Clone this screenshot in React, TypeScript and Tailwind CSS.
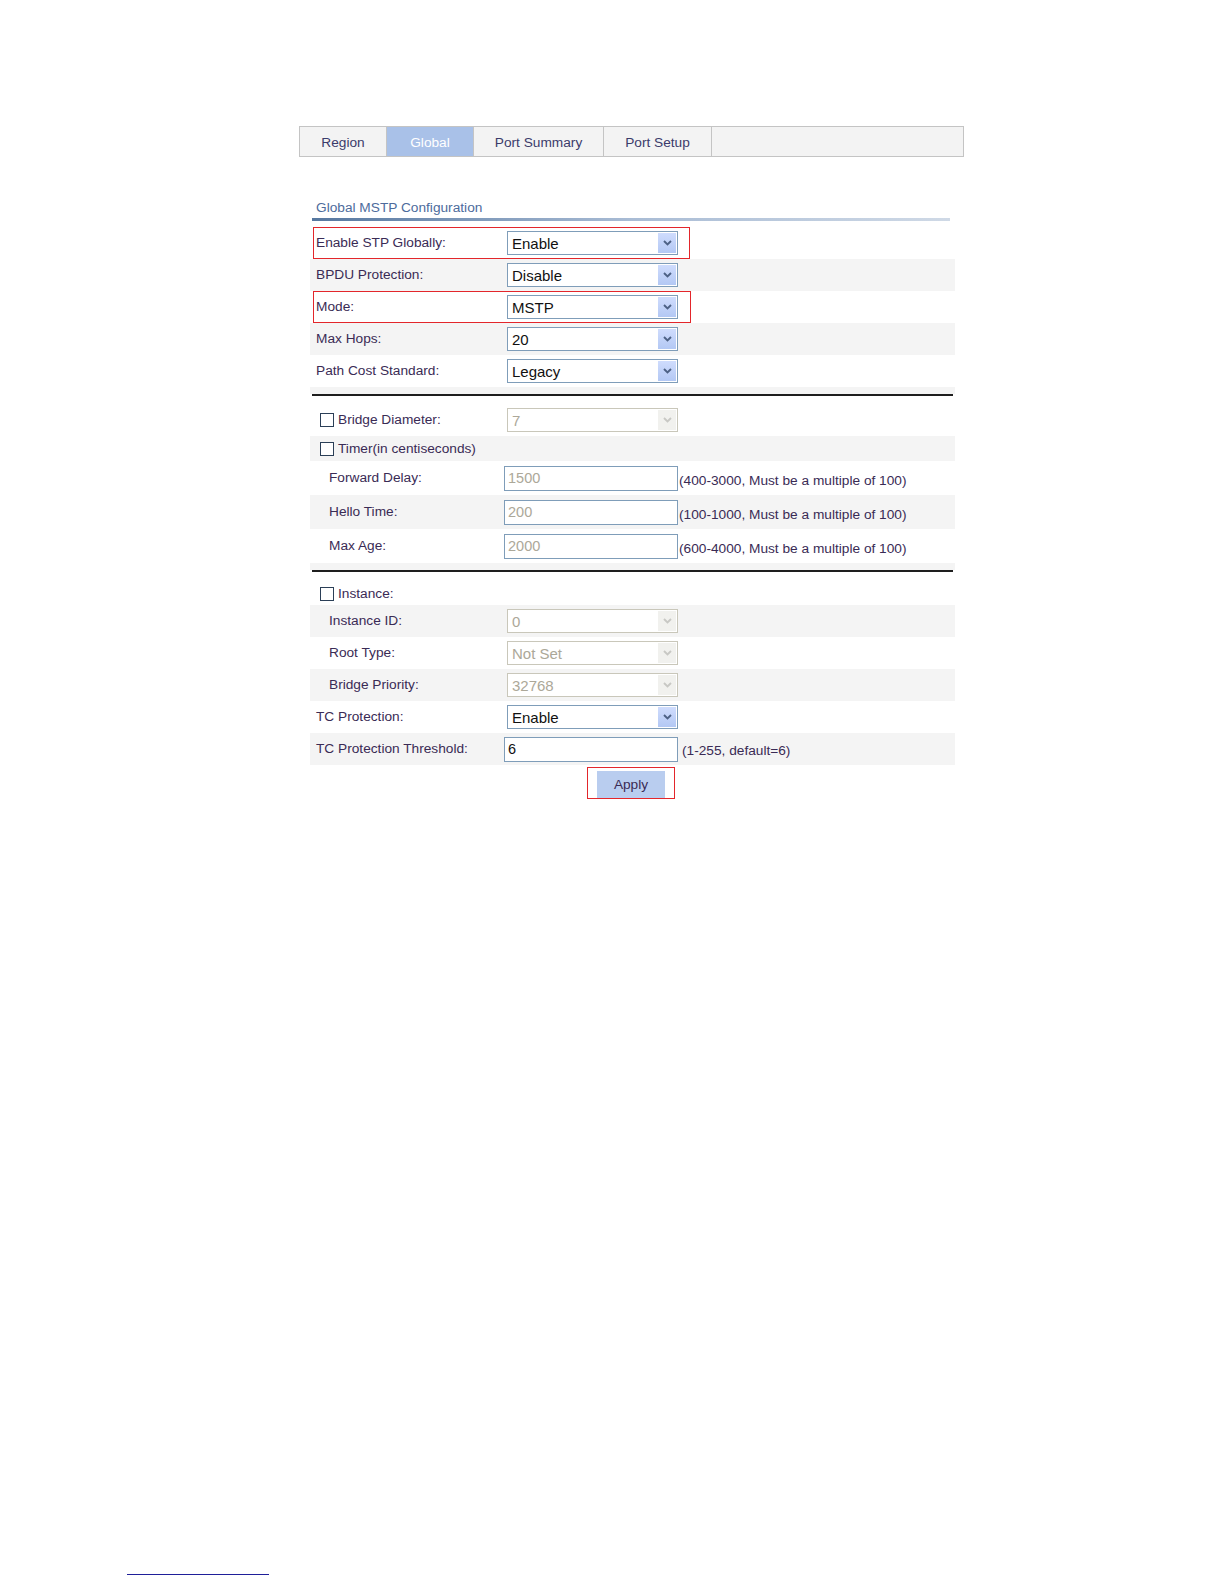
import React from "react";

const LABEL = "text-[#3a2b55]";

function Chevron({ color }: { color: string }) {
  return (
    <svg width="9" height="6" viewBox="0 0 9 6" fill="none">
      <path d="M1 1 L4.5 4.5 L8 1" stroke={color} strokeWidth="1.9" />
    </svg>
  );
}

function Select({ value, disabled = false }: { value: string; disabled?: boolean }) {
  return (
    <div
      className={
        disabled
          ? "w-[171px] h-[24px] border border-[#c9c7ba] bg-white flex items-center"
          : "w-[171px] h-[24px] border border-[#7f9db9] bg-white flex items-center"
      }
    >
      <span
        className={
          disabled
            ? "pl-[4px] text-[15px] text-[#aca899] leading-none"
            : "pl-[4px] text-[15px] text-[#111111] leading-none"
        }
      >
        {value}
      </span>
      <div
        className={
          disabled
            ? "ml-auto mr-px w-[18px] h-[20px] bg-[#f1f1ee] flex items-center justify-center"
            : "ml-auto mr-px w-[18px] h-[20px] bg-linear-to-b from-[#cfdcfd] to-[#b3c8f4] flex items-center justify-center"
        }
      >
        <Chevron color={disabled ? "#c8c8c4" : "#4d6185"} />
      </div>
    </div>
  );
}

function TextInput({ value, disabled = false }: { value: string; disabled?: boolean }) {
  return (
    <div className="w-[174px] h-[25px] border border-[#7f9db9] bg-white flex items-center">
      <span
        className={
          disabled
            ? "pl-[3px] text-[14.5px] text-[#aca899] leading-none"
            : "pl-[3px] text-[14.5px] text-[#111111] leading-none"
        }
      >
        {value}
      </span>
    </div>
  );
}

function Checkbox() {
  return <div className="w-[14px] h-[14px] border border-[#2b3f57] bg-white shrink-0" />;
}

function Row({
  gray,
  h = "h-[32px]",
  children,
}: {
  gray?: boolean;
  h?: string;
  children: React.ReactNode;
}) {
  return (
    <div className={(gray ? "bg-[#f4f4f4] " : "bg-white ") + h + " relative flex items-center"}>
      {children}
    </div>
  );
}

function Label({ text, indent = false, w = "w-[197px]" }: { text: string; indent?: boolean; w?: string }) {
  return (
    <div className={(indent ? "pl-[19px] " : "pl-[6px] ") + w + " shrink-0 text-[13.7px] " + LABEL}>
      {text}
    </div>
  );
}

function RedBox({ w }: { w: string }) {
  return <div className={"absolute left-[3px] top-0 h-[32px] border border-[#e3262b] " + w} />;
}

function Separator() {
  return (
    <>
      <div className="h-[7px] bg-[#f4f4f4]" />
      <div className="h-[2px] bg-[#1e1e1e] mx-[2px]" />
      <div className="h-[8px] bg-white" />
    </>
  );
}

export default function App() {
  return (
    <div className="w-[1224px] h-[1584px] bg-white flex flex-col font-['Liberation_Sans',Arial,sans-serif]">
      {/* Tabs */}
      <div className="pt-[126px] pl-[299px]">
        <div className="w-[665px] h-[31px] flex border border-[#c4c4c4] bg-[#f3f3f3] text-[13.7px]">
          <div className="w-[87px] pt-[3px] border-r border-[#c4c4c4] flex items-center justify-center text-[#3b3b6b]">
            Region
          </div>
          <div className="w-[87px] pt-[3px] border-r border-[#c4c4c4] bg-[#a9c1e8] flex items-center justify-center text-white">
            Global
          </div>
          <div className="w-[130px] pt-[3px] border-r border-[#c4c4c4] flex items-center justify-center text-[#3b3b6b]">
            Port Summary
          </div>
          <div className="w-[108px] pt-[3px] border-r border-[#c4c4c4] flex items-center justify-center text-[#3b3b6b]">
            Port Setup
          </div>
          <div className="flex-1" />
        </div>
      </div>

      {/* Form */}
      <div className="ml-[310px] w-[645px] mt-[42px]">
        <div className="pl-[6px] text-[13.7px] leading-[17px] text-[#4d6b9c]">Global MSTP Configuration</div>
        <div className="mt-[2px] ml-[2px] w-[638px] h-[3px] bg-linear-to-r from-[#56779f] via-[#a9bcd5] to-[#cfd9e6]" />
        <div className="mt-[6px]">
          <Row>
            <Label text="Enable STP Globally:" />
            <Select value="Enable" />
            <RedBox w="w-[377px]" />
          </Row>
          <Row gray>
            <Label text="BPDU Protection:" />
            <Select value="Disable" />
          </Row>
          <Row>
            <Label text="Mode:" />
            <Select value="MSTP" />
            <RedBox w="w-[378px]" />
          </Row>
          <Row gray>
            <Label text="Max Hops:" />
            <Select value="20" />
          </Row>
          <Row>
            <Label text="Path Cost Standard:" />
            <Select value="Legacy" />
          </Row>

          <Separator />

          <Row>
            <div className="pl-[10px] w-[197px] shrink-0 flex items-center gap-[4px]">
              <Checkbox />
              <span className={"text-[13.7px] " + LABEL}>Bridge Diameter:</span>
            </div>
            <Select value="7" disabled />
          </Row>
          <Row gray h="h-[25px]">
            <div className="pl-[10px] pt-[2px] flex items-center gap-[4px]">
              <Checkbox />
              <span className={"text-[13.7px] " + LABEL}>Timer(in centiseconds)</span>
            </div>
          </Row>
          <Row h="h-[34px]">
            <Label text="Forward Delay:" indent w="w-[194px]" />
            <TextInput value="1500" disabled />
            <span className={"pl-px pt-[6px] text-[13.7px] " + LABEL}>(400-3000, Must be a multiple of 100)</span>
          </Row>
          <Row gray h="h-[34px]">
            <Label text="Hello Time:" indent w="w-[194px]" />
            <TextInput value="200" disabled />
            <span className={"pl-px pt-[6px] text-[13.7px] " + LABEL}>(100-1000, Must be a multiple of 100)</span>
          </Row>
          <Row h="h-[34px]">
            <Label text="Max Age:" indent w="w-[194px]" />
            <TextInput value="2000" disabled />
            <span className={"pl-px pt-[6px] text-[13.7px] " + LABEL}>(600-4000, Must be a multiple of 100)</span>
          </Row>

          <Separator />

          <Row h="h-[25px]">
            <div className="pl-[10px] pt-[3px] flex items-center gap-[4px]">
              <Checkbox />
              <span className={"text-[13.7px] " + LABEL}>Instance:</span>
            </div>
          </Row>
          <Row gray>
            <Label text="Instance ID:" indent />
            <Select value="0" disabled />
          </Row>
          <Row>
            <Label text="Root Type:" indent />
            <Select value="Not Set" disabled />
          </Row>
          <Row gray>
            <Label text="Bridge Priority:" indent />
            <Select value="32768" disabled />
          </Row>
          <Row>
            <Label text="TC Protection:" />
            <Select value="Enable" />
          </Row>
          <Row gray>
            <Label text="TC Protection Threshold:" w="w-[194px]" />
            <TextInput value="6" />
            <span className={"pl-[4px] pt-[4px] text-[13.7px] " + LABEL}>(1-255, default=6)</span>
          </Row>
          <div className="pt-[2px] flex justify-center pr-[3px]">
            <div className="border border-[#e3262b] px-[9px] pt-[3px] h-[32px]">
              <div className="w-[68px] h-[27px] pt-[2px] bg-[#b9cdef] flex items-center justify-center text-[13.7px] text-[#3a2b55]">
                Apply
              </div>
            </div>
          </div>
        </div>
      </div>

      {/* Footnote rule */}
      <div className="mt-auto mb-[9px] ml-[127px] w-[142px] h-px bg-[#1f1f99]" />
    </div>
  );
}
